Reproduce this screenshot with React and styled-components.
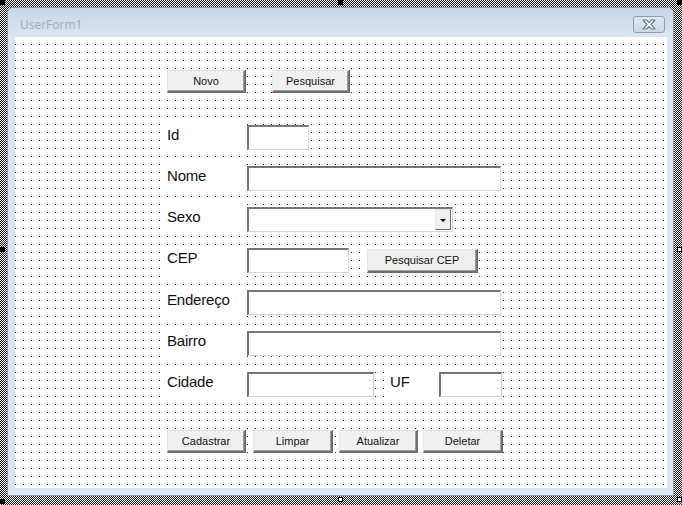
import styled, { createGlobalStyle } from "styled-components";

const GlobalStyle = createGlobalStyle`
  html, body { margin: 0; padding: 0; background: #fff; }
  body { font-family: "Liberation Sans", Arial, sans-serif; }
`;

// moldura hachurada de seleção do designer
const Canvas = styled.div`
  position: relative;
  width: 682px;
  height: 505px;
  box-sizing: border-box;
  padding: 7px 8px 9px 7px;
  background: repeating-conic-gradient(#1a1a1a 0 25%, #ffffff 0 50%) 0 0 / 2px 2px;
`;

const Handle = styled.div`
  position: absolute;
  width: 5px;
  height: 5px;
  box-sizing: border-box;
  background: ${(p) => (p.$filled ? "#000" : "#fff")};
  border: 1px solid #000;
`;

const Window = styled.div`
  height: 100%;
  box-sizing: border-box;
  display: flex;
  flex-direction: column;
  border: 1px solid #8d9bab;
  border-radius: 6px 6px 0 0;
  background: #dbe6f2;
  overflow: hidden;
`;

const TitleBar = styled.div`
  height: 29px;
  flex: none;
  display: flex;
  align-items: center;
  justify-content: space-between;
  padding: 4px 8px 0 12px;
  box-sizing: border-box;
  background: linear-gradient(#c6d5e6, #dbe6f2);
`;

const Title = styled.span`
  font-family: "Open Sans", "Noto Sans", sans-serif;
  font-size: 12px;
  color: #a3adb8;
`;

const CloseButton = styled.div`
  width: 32px;
  height: 17px;
  box-sizing: border-box;
  border: 1px solid #8c9bad;
  border-radius: 3px;
  background: linear-gradient(#dfe7f0, #cdd9e6);
  display: flex;
  align-items: center;
  justify-content: center;
`;

const Frame = styled.div`
  flex: 1;
  display: flex;
  padding: 0 6px 7px 7px;
`;

const Client = styled.div`
  flex: 1;
  box-sizing: border-box;
  padding: 33px 0 0 152px;
  background:
    linear-gradient(90deg, #fff 7px, transparent 7px) 1px 0 / 8px 8px,
    linear-gradient(#fff 7px, #2a2a2a 7px) 0 0 / 8px 8px;
  display: flex;
  flex-direction: column;
  align-items: flex-start;
`;

const ButtonRow = styled.div`
  display: flex;
  gap: ${(p) => p.$gap || 6}px;
  margin-top: ${(p) => p.$top || 0}px;
`;

const Button = styled.div`
  width: ${(p) => p.$w || 79}px;
  height: ${(p) => p.$h || 23}px;
  box-sizing: border-box;
  background: #f0f0f0;
  border-top: 1px solid #e6e6e6;
  border-left: 1px solid #e6e6e6;
  border-right: 2px solid #6f6f6f;
  border-bottom: 2px solid #6f6f6f;
  box-shadow: inset -1px -1px 0 #a0a0a0;
  display: flex;
  align-items: center;
  justify-content: center;
  font-size: 11px;
  color: #111;
  margin-left: ${(p) => p.$left || 0}px;
`;

const Fields = styled.div`
  display: flex;
  flex-direction: column;
  gap: 16px;
  margin: 32px 0 0 -4px;
`;

const Row = styled.div`
  display: flex;
  align-items: center;
  height: 25px;
  margin-top: ${(p) => p.$top || 0}px;
`;

const Label = styled.div`
  width: ${(p) => p.$w || 77}px;
  height: 32px;
  box-sizing: border-box;
  flex: none;
  background: #fff;
  padding: 4px 0 0 ${(p) => p.$pad ?? 4}px;
  margin: 0 ${(p) => p.$right ?? 7}px 0 ${(p) => p.$left || 0}px;
  font-size: 15px;
  line-height: 18px;
  letter-spacing: -0.2px;
  color: #111;
`;

const TextBox = styled.div`
  width: ${(p) => p.$w}px;
  height: 25px;
  box-sizing: border-box;
  background: #fff;
  border-top: 2px solid #777;
  border-left: 2px solid #777;
  border-right: 1px solid #d6d6d6;
  border-bottom: 1px solid #d6d6d6;
`;

const ComboBox = styled(TextBox)`
  display: flex;
  justify-content: flex-end;
  padding: 0 1px 1px 0;
`;

const DropButton = styled.div`
  width: 16px;
  box-sizing: border-box;
  background: #f0f0f0;
  border-top: 1px solid #e6e6e6;
  border-left: 1px solid #e6e6e6;
  border-right: 1px solid #6f6f6f;
  border-bottom: 1px solid #6f6f6f;
  display: flex;
  align-items: center;
  justify-content: center;
  padding-top: 2px;
`;

const Arrow = styled.div`
  width: 0;
  height: 0;
  border-left: 3px solid transparent;
  border-right: 3px solid transparent;
  border-top: 3px solid #000;
`;

const fields = [
  { label: "Id", w: 62 },
  { label: "Nome", w: 254 },
];

const fields2 = [
  { label: "Endereço", w: 254 },
  { label: "Bairro", w: 254 },
];

export default function App() {
  return (
    <>
      <GlobalStyle />
      <Canvas>
        <Window>
          <TitleBar>
            <Title>UserForm1</Title>
            <CloseButton>
              <svg width="16" height="11" viewBox="0 0 16 11">
                <path
                  d="M2 1h3.5L8 3.6 10.5 1H14l-4 4.5 4 4.5h-3.5L8 7.4 5.5 10H2l4-4.5z"
                  fill="#fff"
                  stroke="#6f7c8b"
                  strokeWidth="1.2"
                  strokeLinejoin="round"
                />
              </svg>
            </CloseButton>
          </TitleBar>
          <Frame>
            <Client>
              <ButtonRow $gap={26}>
                <Button>Novo</Button>
                <Button $w={78}>Pesquisar</Button>
              </ButtonRow>

              <Fields>
                {fields.map((f) => (
                  <Row key={f.label}>
                    <Label>{f.label}</Label>
                    <TextBox $w={f.w} />
                  </Row>
                ))}
                <Row>
                  <Label>Sexo</Label>
                  <ComboBox $w={206}>
                    <DropButton>
                      <Arrow />
                    </DropButton>
                  </ComboBox>
                </Row>
                <Row>
                  <Label>CEP</Label>
                  <TextBox $w={102} />
                  <Button $w={111} $h={24} $left={18}>Pesquisar CEP</Button>
                </Row>
                {fields2.map((f, i) => (
                  <Row key={f.label} $top={i === 0 ? 1 : 0}>
                    <Label>{f.label}</Label>
                    <TextBox $w={f.w} />
                  </Row>
                ))}
                <Row>
                  <Label>Cidade</Label>
                  <TextBox $w={127} />
                  <Label $w={50} $pad={6} $left={10} $right={5}>UF</Label>
                  <TextBox $w={63} />
                </Row>
              </Fields>

              <ButtonRow $top={33}>
                <Button>Cadastrar</Button>
                <Button $w={80} $left={1}>Limpar</Button>
                <Button>Atualizar</Button>
                <Button $w={80} $left={-1}>Deletar</Button>
              </ButtonRow>
            </Client>
          </Frame>
        </Window>

        <Handle $filled style={{ left: 0, top: 0 }} />
        <Handle $filled style={{ left: 338, top: 0 }} />
        <Handle $filled style={{ left: 677, top: 0 }} />
        <Handle $filled style={{ left: 0, top: 247 }} />
        <Handle style={{ left: 677, top: 247 }} />
        <Handle $filled style={{ left: 0, top: 499 }} />
        <Handle style={{ left: 338, top: 497 }} />
        <Handle style={{ left: 677, top: 497 }} />
      </Canvas>
    </>
  );
}
